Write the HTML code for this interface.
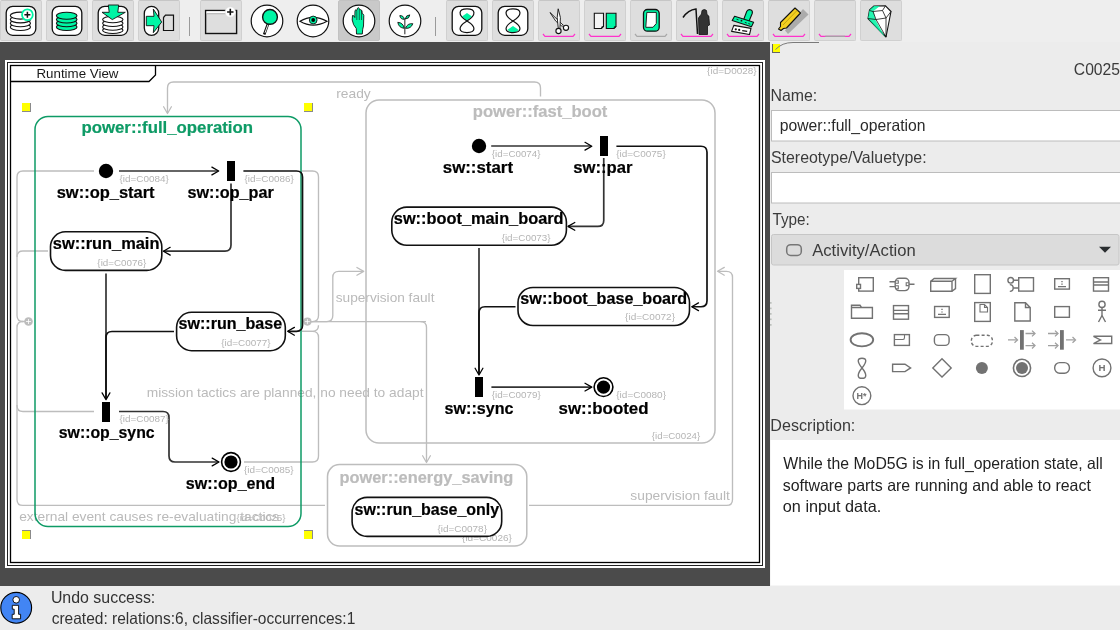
<!DOCTYPE html>
<html><head><meta charset="utf-8">
<style>
html,body{margin:0;padding:0}
body{width:1120px;height:630px;overflow:hidden;position:relative;background:#ededed;font-family:"Liberation Sans",sans-serif;color:#333}
.abs{position:absolute}
svg.abs{will-change:transform}
#toolbar{left:0;top:0;width:1120px;height:42px;background:#eeeeee}
.btn{position:absolute;top:0;width:40px;height:39px;background:#dedede;border:1px solid #d0d0d0;border-top-color:#c6c6c6;border-radius:2px}
.btn.flat{background:transparent;border-color:transparent}
.btn.sel{background:#c9c9c9;border-color:#c2c2c2}
.sep{position:absolute;top:17px;width:1px;height:19px;background:#9a9a9a}
#canvas{left:0;top:42px;width:770px;height:544px;background:#4b4b4b}
#paper{left:5px;top:60px;width:760px;height:508px;background:#fff}
#panel{left:770px;top:42px;width:350px;height:544px;background:#ececec}
#status{left:0;top:586px;width:1120px;height:44px;background:#ececec}
.lbl{position:absolute;font-size:15.4px;color:#3a3a3a;white-space:pre;line-height:1}
.inp{position:absolute;left:771px;width:348px;height:30px;background:#fff;border:1px solid #bdbdbd;border-right:none}
</style></head><body>
<div id="toolbar" class="abs">
  <div class="btn" style="left:0"></div>
  <div class="btn" style="left:46px"></div>
  <div class="btn" style="left:92px"></div>
  <div class="btn" style="left:138px"></div>
  <div class="sep" style="left:189px"></div>
  <div class="btn" style="left:200px"></div>
  <div class="btn flat" style="left:246px"></div>
  <div class="btn flat" style="left:292px"></div>
  <div class="btn sel" style="left:338px"></div>
  <div class="btn flat" style="left:384px"></div>
  <div class="sep" style="left:435px"></div>
  <div class="btn" style="left:446px"></div>
  <div class="btn" style="left:492px"></div>
  <div class="btn" style="left:538px"></div>
  <div class="btn" style="left:584px"></div>
  <div class="btn" style="left:630px"></div>
  <div class="btn" style="left:676px"></div>
  <div class="btn" style="left:722px"></div>
  <div class="btn" style="left:768px"></div>
  <div class="btn" style="left:814px"></div>
  <div class="btn" style="left:860px"></div>
</div>
<div id="canvas" class="abs"></div>
<div id="paper" class="abs"></div>
<div id="panel" class="abs"></div>
<div id="status" class="abs"></div>
<svg class="abs" style="left:0;top:0" width="910" height="42" viewBox="0 0 910 42">
<rect x="6.2" y="6.3" width="29.6" height="29" rx="6.5" fill="#fff" stroke="#111" stroke-width="1.3"/>
<ellipse cx="20.4" cy="27" rx="10.1" ry="3.5" fill="#fff" stroke="#111" stroke-width="1.1"/>
<ellipse cx="20.4" cy="23.2" rx="10.1" ry="3.5" fill="#fff" stroke="#111" stroke-width="1.1"/>
<ellipse cx="20.4" cy="19.4" rx="10.1" ry="3.5" fill="#fff" stroke="#111" stroke-width="1.1"/>
<ellipse cx="20.4" cy="15.6" rx="10.1" ry="3.5" fill="#fff" stroke="#111" stroke-width="1.1"/>
<circle cx="27.4" cy="14.7" r="5.4" fill="#fff" stroke="#00f5a5" stroke-width="1.8"/>
<path d="M27.4,11.7 V17.7 M24.4,14.7 H30.4" stroke="#111" stroke-width="1.5"/>
<rect x="52.2" y="6.3" width="29.6" height="29" rx="6.5" fill="#fff" stroke="#111" stroke-width="1.3"/>
<ellipse cx="66.7" cy="27" rx="10.3" ry="3.5" fill="#00f5a5" stroke="#111" stroke-width="1.1"/>
<ellipse cx="66.7" cy="23.3" rx="10.3" ry="3.5" fill="#00f5a5" stroke="#111" stroke-width="1.1"/>
<ellipse cx="66.7" cy="19.5" rx="10.3" ry="3.5" fill="#00f5a5" stroke="#111" stroke-width="1.1"/>
<ellipse cx="66.7" cy="15.7" rx="10.3" ry="3.5" fill="#00f5a5" stroke="#111" stroke-width="1.1"/>
<rect x="98.2" y="6.3" width="29.6" height="29" rx="6.5" fill="#fff" stroke="#111" stroke-width="1.3"/>
<ellipse cx="112.8" cy="30.2" rx="10.2" ry="3.3" fill="#fff" stroke="#111" stroke-width="1.1"/>
<ellipse cx="112.8" cy="26.9" rx="10.2" ry="3.3" fill="#fff" stroke="#111" stroke-width="1.1"/>
<ellipse cx="112.8" cy="23.2" rx="10.2" ry="3.3" fill="#fff" stroke="#111" stroke-width="1.1"/>
<ellipse cx="112.8" cy="19.5" rx="10.2" ry="3.3" fill="#fff" stroke="#111" stroke-width="1.1"/>
<path d="M108.3,5 H118.7 L117.8,12.3 H125.3 L112.3,19.6 L102,12.3 H109.2 Z" fill="#00f5a5" stroke="#111" stroke-width="0.9" stroke-linejoin="round"/>
<rect x="144.3" y="6.3" width="14.4" height="29" rx="7.2" fill="#fff" stroke="#111" stroke-width="1.3"/>
<path d="M146.3,16.3 H154 L153.3,9 L161.7,22 L153.3,32.7 L154,25.7 H146.3 Z" fill="#00f5a5" stroke="#111" stroke-width="0.9" stroke-linejoin="round"/>
<path d="M165.5,15.2 H173.5 V30.5 H163.5 V17.5 Z M163.5,17.5 L165.5,15.2" fill="#dedede" stroke="#111" stroke-width="1.2"/>
<rect x="205.6" y="10.5" width="31" height="23" fill="#dedede" stroke="#111" stroke-width="1.4"/>
<rect x="206.5" y="11.3" width="24" height="2.2" fill="#fff"/><rect x="206.5" y="13.3" width="24" height="0.9" fill="#aaa"/>
<circle cx="230.3" cy="12" r="5.2" fill="#fff" stroke="#ddd" stroke-width="0.6"/>
<path d="M230.3,8.8 V15.2 M227.1,12 H233.5" stroke="#111" stroke-width="1.6"/>
<circle cx="267" cy="21" r="15.8" fill="#fff" stroke="#111" stroke-width="1.2"/>
<circle cx="313" cy="21" r="15.8" fill="#fff" stroke="#111" stroke-width="1.2"/>
<circle cx="359" cy="21" r="15.8" fill="#fff" stroke="#111" stroke-width="1.2"/>
<circle cx="405" cy="21" r="15.8" fill="#fff" stroke="#111" stroke-width="1.2"/>
<path d="M268,24 L264.6,33.3" stroke="#111" stroke-width="2.6" stroke-linecap="square"/>
<path d="M268,24.5 L265,32.8" stroke="#fff" stroke-width="0.9"/>
<circle cx="270" cy="16.9" r="7.4" fill="#00f5a5" stroke="#111" stroke-width="1.4"/>
<path d="M300,21.3 Q313,13.5 327,21.3 Q313,29 300,21.3 Z" fill="#fff" stroke="#111" stroke-width="1.2"/>
<circle cx="313.2" cy="20" r="3.9" fill="#00f5a5" stroke="#111" stroke-width="0.9"/>
<circle cx="313.2" cy="20" r="1.9" fill="#000"/>
<path d="M356.5,34 L356.3,28.5 Q353,25 352.2,20 L352.5,15.5 Q353.5,14.8 354.8,17.5 L355,10.5 Q355.8,9.2 356.8,10.5 L357.5,8.2 Q358.5,7 359.3,8.5 L360.3,9.8 Q361.5,9.5 362,11 L362.2,13.5 Q363.5,13.8 363.8,15.5 L363.5,26 Q362.5,28.5 362.3,34 Z" fill="#00f5a5" stroke="#111" stroke-width="0.9" stroke-linejoin="round"/>
<path d="M356.8,11 V20 M359.3,9 V20 M361.5,11 V20" stroke="#111" stroke-width="0.6"/>
<path d="M404.8,18.5 V34.3" stroke="#555" stroke-width="1.3"/>
<path d="M404.3,19.3 Q403.70,15.44 399.8,15.6 Q400.40,19.46 404.3,19.3 Z" fill="#00f5a5" stroke="#111" stroke-width="0.9" stroke-linejoin="round"/>
<path d="M405.3,19.0 Q409.30,18.87 409.8,14.9 Q405.80,15.03 405.3,19.0 Z" fill="#00f5a5" stroke="#111" stroke-width="0.9" stroke-linejoin="round"/>
<path d="M404.2,28.3 Q403.33,22.82 397.8,22.3 Q398.67,27.78 404.2,28.3 Z" fill="#00f5a5" stroke="#111" stroke-width="0.9" stroke-linejoin="round"/>
<path d="M405.5,28.3 Q410.96,28.88 412.8,23.7 Q407.34,23.12 405.5,28.3 Z" fill="#00f5a5" stroke="#111" stroke-width="0.9" stroke-linejoin="round"/>
<rect x="452.2" y="6.3" width="29.6" height="29" rx="6.5" fill="#fff" stroke="#111" stroke-width="1.3"/>
<path d="M467,13 L472,16.5 L467,21 L462,16.5 Z" fill="#00f5a5"/>
<path d="M467,21 C457,15 458.5,8.8 467,8.8 C475.5,8.8 477,15 467,21 C457,27 458.5,32.6 467,32.6 C475.5,32.6 477,27 467,21 Z" fill="none" stroke="#111" stroke-width="1.2"/>
<rect x="498.2" y="6.3" width="29.6" height="29" rx="6.5" fill="#fff" stroke="#111" stroke-width="1.3"/>
<path d="M507.5,29.7 L513,26 L518.5,29.7 Q517,32.3 513,32.3 Q509,32.3 507.5,29.7 Z" fill="#00f5a5"/>
<path d="M513,21 C503,15 504.5,8.8 513,8.8 C521.5,8.8 523,15 513,21 C503,27 504.5,32.6 513,32.6 C521.5,32.6 523,27 513,21 Z" fill="none" stroke="#111" stroke-width="1.2"/>
<path d="M550,12.5 L557,19.2 L563.3,25.3 L562.2,26.4 L555.8,21.2 Z" fill="#fff" stroke="#111" stroke-width="0.9" stroke-linejoin="round"/>
<path d="M558.2,8.8 L560.4,17.5 L559.9,28.5 L558.3,28.5 L557.2,17.5 Z" fill="#fff" stroke="#111" stroke-width="0.9" stroke-linejoin="round"/>
<circle cx="558.5" cy="31" r="2.6" fill="#fff" stroke="#111" stroke-width="1.1"/>
<circle cx="566" cy="27.8" r="2.6" fill="#fff" stroke="#111" stroke-width="1.1"/>
<path d="M543,34 L545,36.3 H573 L575,34" fill="none" stroke="#ff33cc" stroke-width="1.2"/>
<path d="M594.3,13.2 H603.5 V26.5 L601.5,28.5 H594.3 Z" fill="#f4f4f4" stroke="#111" stroke-width="1.1"/>
<path d="M606.3,13.2 H616 V26.5 L614,28.5 H606.3 Z" fill="#00f5a5" stroke="#111" stroke-width="1.1"/>
<path d="M601.5,28.5 L601.8,26.7 L603.5,26.5 Z M614,28.5 L614.3,26.7 L616,26.5 Z" fill="#333" stroke="#111" stroke-width="0.6"/>
<path d="M589,34 L591,36.3 H619 L621,34" fill="none" stroke="#ff33cc" stroke-width="1.2"/>
<rect x="643.5" y="9.5" width="15.7" height="21.7" rx="4" fill="#00f5a5" stroke="#111" stroke-width="1.3"/>
<path d="M646.8,12.4 H656.3 V23.5 L653,27.3 H645.8 Z" fill="#fff" stroke="#111" stroke-width="0.9"/>
<path d="M635,34 L637,36.3 H665 L667,34" fill="none" stroke="#a8a8a8" stroke-width="1.2"/>
<path d="M683,17.5 Q688,10 696,9 L697.5,34" fill="none" stroke="#111" stroke-width="1.5"/>
<path d="M699,34.5 L698.5,18 Q700.5,15 701.5,14 L702,10.5 Q704.5,8.5 706.5,10.5 L707,14.5 Q709.5,15.5 709,18.5 L709.5,25 L707.5,26 L707.5,34.5 Z" fill="#333" stroke="#111" stroke-width="0.8"/>
<path d="M681,34 L683,36.3 H711 L713,34" fill="none" stroke="#ff33cc" stroke-width="1.2"/>
<path d="M743.2,20.8 L746.8,11.3 Q748.5,8.8 751,9.9 Q753,11.2 752.2,13.5 L748.6,22.3 Z" fill="#00f5a5" stroke="#111" stroke-width="1.1" stroke-linejoin="round"/>
<path d="M734.6,16.3 L753.6,22.3 L751.4,26.8 L732.2,20.6 Z" fill="#00f5a5" stroke="#111" stroke-width="1.1" stroke-linejoin="round"/>
<circle cx="741.5" cy="20.7" r="0.9" fill="#111"/><path d="M736.5,19.2 L738.5,19.9 M744.8,22.3 L746.8,23 M748.3,23.5 L750.3,24.2" stroke="#111" stroke-width="0.8"/>
<path d="M733.8,25.4 L751,28.4 L749.5,34.5 L731.6,31.4 Z" fill="#fff" stroke="#111" stroke-width="1.1" stroke-linejoin="round"/>
<circle cx="735.8" cy="29.3" r="1.1" fill="#111"/><circle cx="739.2" cy="29.9" r="1.1" fill="#111"/><path d="M742.2,30.6 L747.2,31.4" stroke="#111" stroke-width="1.1"/>
<path d="M727,34 L729,36.3 H757 L759,34" fill="none" stroke="#ff33cc" stroke-width="1.2"/>
<path d="M803,9 L808.5,14.5 L788,34 L785,30.5 Z" fill="#888" opacity="0.6"/>
<path d="M780.5,22.5 L795,8 L800.5,13 L786.5,28 L783.5,28.5 L781,30.5 L778.5,29 L780.5,26.5 Z" fill="#f5d020" stroke="#111" stroke-width="1.1" stroke-linejoin="round"/>
<path d="M783,25 L797,10.5" stroke="#b59a10" stroke-width="0.8"/>
<path d="M773,34 L775,36.3 H803 L805,34" fill="none" stroke="#ff33cc" stroke-width="1.2"/>
<path d="M819,34 L821,36.3 H849 L851,34" fill="none" stroke="#ff33cc" stroke-width="1.2"/>
<path d="M825.2,36.3 H845" stroke="#a4a4a4" stroke-width="1.3"/>
<path d="M869.5,10 L874,6 L885.5,5.8 L891,11.5 L886,37 L868,18.5 Z" fill="#fff" stroke="#111" stroke-width="1.1" stroke-linejoin="round"/>
<path d="M869.5,10 L874,6 L880,6 L873.5,11 L875.5,20 L885,37 L868,18.5 Z" fill="#00f5a5" opacity="0.85"/>
<path d="M869.5,10.5 L873,11.5 L882.5,10.5 L885.5,5.8 M882.5,10.5 L886,18 L876,19.5 L873,11.5 M876,19.5 L868,18.5 M886,18 L891,11.5 M876,19.5 L886,37 M886,18 V37" fill="none" stroke="#111" stroke-width="0.8"/>
</svg><svg class="abs" style="left:0;top:0" width="770" height="586" viewBox="0 0 770 586" font-family="Liberation Sans, sans-serif">
<rect x="7.5" y="62.5" width="755" height="503" fill="none" stroke="#222" stroke-width="1"/>
<rect x="10.5" y="65.5" width="749" height="497" fill="none" stroke="#000" stroke-width="1.3"/>
<path d="M10.5,81.5 H149 L155.5,75 V65.5" fill="none" stroke="#000" stroke-width="1.3"/>
<text x="36.46" y="77.80" font-size="13" font-weight="normal" fill="#1a1a1a" textLength="82.03" lengthAdjust="spacingAndGlyphs">Runtime View</text>
<text x="707.14" y="74.10" font-size="9" font-weight="normal" fill="#b5b5b5" textLength="49.49" lengthAdjust="spacingAndGlyphs">{id=D0028}</text>
<path d="M540.5,96.6 V88 Q540.5,82 534.5,82 H173.5 Q167.5,82 167.5,88 V113" fill="none" stroke="#bdbdbd" stroke-width="1.35" stroke-linecap="butt"/>
<path d="M163.60,106.70 L167.50,113.50 L171.40,106.70" fill="none" stroke="#bdbdbd" stroke-width="1.25" stroke-linecap="round" stroke-linejoin="round"/>
<text x="336.27" y="97.90" font-size="13.3" font-weight="normal" fill="#bababa" textLength="34.51" lengthAdjust="spacingAndGlyphs">ready</text>
<path d="M94,171 H23 Q17,171 17,177 V315.5 Q17,321.5 23,321.5 H25" fill="none" stroke="#bdbdbd" stroke-width="1.35" stroke-linecap="butt"/>
<path d="M48,251 H23 Q17,251 17,257" fill="none" stroke="#bdbdbd" stroke-width="1.35" stroke-linecap="butt"/>
<path d="M94,411.5 H23 Q17,411.5 17,405.5 V327.5 Q17,321.5 23,321.5" fill="none" stroke="#bdbdbd" stroke-width="1.35" stroke-linecap="butt"/>
<path d="M325,505.4 H23 Q17,505.4 17,499.4 V405" fill="none" stroke="#bdbdbd" stroke-width="1.35" stroke-linecap="butt"/>
<circle cx="28.5" cy="321.5" r="4.3" fill="#bdbdbd"/>
<path d="M28.5,319 V324 M26,321.5 H31" stroke="#fff" stroke-width="0.8"/>
<path d="M302,171 H312.5 Q318.5,171 318.5,177 V315.6 Q318.5,321.6 312.5,321.6 H311" fill="none" stroke="#bdbdbd" stroke-width="1.35" stroke-linecap="butt"/>
<path d="M244,462 H312.5 Q318.5,462 318.5,456 V337.3 Q318.5,331.3 312.5,331.3 H302" fill="none" stroke="#bdbdbd" stroke-width="1.35" stroke-linecap="butt"/>
<path d="M302,331.3 H312.5 Q318.5,331.3 318.5,325.3" fill="none" stroke="#bdbdbd" stroke-width="1.35" stroke-linecap="butt"/>
<path d="M311,321.6 H426" fill="none" stroke="#bdbdbd" stroke-width="1.35" stroke-linecap="butt"/>
<path d="M311,321.6 H326.8 Q332.8,321.6 332.8,315.6 V277.4 Q332.8,271.4 338.8,271.4 H363" fill="none" stroke="#bdbdbd" stroke-width="1.35" stroke-linecap="butt"/>
<path d="M356.90,267.50 L363.70,271.40 L356.90,275.30" fill="none" stroke="#bdbdbd" stroke-width="1.25" stroke-linecap="round" stroke-linejoin="round"/>
<text x="335.76" y="302.10" font-size="13.3" font-weight="normal" fill="#bababa" textLength="98.69" lengthAdjust="spacingAndGlyphs">supervision fault</text>
<path d="M420.5,321.6 Q426.5,321.6 426.5,327.6 V462" fill="none" stroke="#bdbdbd" stroke-width="1.35" stroke-linecap="butt"/>
<path d="M422.60,455.70 L426.50,462.50 L430.40,455.70" fill="none" stroke="#bdbdbd" stroke-width="1.25" stroke-linecap="round" stroke-linejoin="round"/>
<circle cx="307.4" cy="321.6" r="4.1" fill="#bdbdbd"/>
<path d="M307.4,319.1 V324.1 M304.9,321.6 H309.9" stroke="#fff" stroke-width="0.8"/>
<text x="146.68" y="397.20" font-size="13.3" font-weight="normal" fill="#bababa" textLength="276.85" lengthAdjust="spacingAndGlyphs">mission tactics are planned, no need to adapt</text>
<path d="M529,505.4 H726.5 Q732.5,505.4 732.5,499.4 V277.3 Q732.5,271.3 726.5,271.3 H718" fill="none" stroke="#bdbdbd" stroke-width="1.35" stroke-linecap="butt"/>
<path d="M724.30,267.40 L717.50,271.30 L724.30,275.20" fill="none" stroke="#bdbdbd" stroke-width="1.25" stroke-linecap="round" stroke-linejoin="round"/>
<text x="630.39" y="500.20" font-size="13.3" font-weight="normal" fill="#bababa" textLength="99.56" lengthAdjust="spacingAndGlyphs">supervision fault</text>
<text x="19.17" y="521.00" font-size="13.3" font-weight="normal" fill="#bababa" textLength="260.06" lengthAdjust="spacingAndGlyphs">external event causes re-evaluating tactics</text>
<rect x="35.00" y="116.50" width="266.00" height="410.00" rx="13" fill="none" stroke="#0e9b66" stroke-width="1.5"/>
<text x="81.47" y="132.50" font-size="16" font-weight="bold" fill="#0e9b66" stroke="#0e9b66" stroke-width="0.2" textLength="171.56" lengthAdjust="spacingAndGlyphs">power::full_operation</text>
<text x="236.40" y="521.40" font-size="9" font-weight="normal" fill="#b5b5b5" textLength="49.05" lengthAdjust="spacingAndGlyphs">{id=C0025}</text>
<rect x="366.00" y="100.00" width="349.00" height="343.00" rx="13" fill="none" stroke="#bdbdbd" stroke-width="1.5"/>
<text x="472.88" y="117.10" font-size="16" font-weight="bold" fill="#bcbcbc" stroke="#bcbcbc" stroke-width="0.2" textLength="134.43" lengthAdjust="spacingAndGlyphs">power::fast_boot</text>
<text x="651.83" y="439.10" font-size="9" font-weight="normal" fill="#b5b5b5" textLength="48.41" lengthAdjust="spacingAndGlyphs">{id=C0024}</text>
<rect x="327.50" y="464.60" width="199.30" height="81.50" rx="12" fill="#fff" stroke="#bdbdbd" stroke-width="1.5"/>
<text x="339.50" y="482.90" font-size="16" font-weight="bold" fill="#bcbcbc" stroke="#bcbcbc" stroke-width="0.2" textLength="173.78" lengthAdjust="spacingAndGlyphs">power::energy_saving</text>
<text x="462.06" y="540.90" font-size="9" font-weight="normal" fill="#b5b5b5" textLength="49.82" lengthAdjust="spacingAndGlyphs">{id=C0026}</text>
<path d="M119,171 H218" fill="none" stroke="#333333" stroke-width="1.7" stroke-linecap="butt"/>
<path d="M211.90,167.10 L218.70,171.00 L211.90,174.90" fill="none" stroke="#000" stroke-width="1.25" stroke-linecap="round" stroke-linejoin="round"/>
<path d="M231,183.5 V245 Q231,251.2 225,251.2 H163.5" fill="none" stroke="#333333" stroke-width="1.7" stroke-linecap="butt"/>
<path d="M170.20,247.30 L163.40,251.20 L170.20,255.10" fill="none" stroke="#000" stroke-width="1.25" stroke-linecap="round" stroke-linejoin="round"/>
<path d="M243.4,171 H296.5 Q302.5,171 302.5,177 V325.3 Q302.5,331.3 296.5,331.3 H288" fill="none" stroke="#111" stroke-width="1.7" stroke-linecap="butt"/>
<path d="M294.40,327.40 L287.60,331.30 L294.40,335.20" fill="none" stroke="#000" stroke-width="1.25" stroke-linecap="round" stroke-linejoin="round"/>
<path d="M106,273.4 V399" fill="none" stroke="#333333" stroke-width="1.7" stroke-linecap="butt"/>
<path d="M174,331.5 H112 Q106,331.5 106,337.5 V399" fill="none" stroke="#111" stroke-width="1.7" stroke-linecap="butt"/>
<path d="M102.10,392.90 L106.00,399.70 L109.90,392.90" fill="none" stroke="#000" stroke-width="1.25" stroke-linecap="round" stroke-linejoin="round"/>
<path d="M119,411.5 H163 Q169,411.5 169,417.5 V456 Q169,462 175,462 H218.5" fill="none" stroke="#333333" stroke-width="1.7" stroke-linecap="butt"/>
<path d="M212.20,458.10 L219.00,462.00 L212.20,465.90" fill="none" stroke="#000" stroke-width="1.25" stroke-linecap="round" stroke-linejoin="round"/>
<path d="M491.2,146 H591" fill="none" stroke="#333333" stroke-width="1.7" stroke-linecap="butt"/>
<path d="M585.00,142.30 L591.80,146.20 L585.00,150.10" fill="none" stroke="#000" stroke-width="1.25" stroke-linecap="round" stroke-linejoin="round"/>
<path d="M603.75,158 V220.4 Q603.75,226.4 597.75,226.4 H568" fill="none" stroke="#333333" stroke-width="1.7" stroke-linecap="butt"/>
<path d="M574.80,222.50 L568.00,226.40 L574.80,230.30" fill="none" stroke="#000" stroke-width="1.25" stroke-linecap="round" stroke-linejoin="round"/>
<path d="M616.4,146.25 H701 Q707,146.25 707,152.25 V300.75 Q707,306.75 701,306.75 H692" fill="none" stroke="#111" stroke-width="1.7" stroke-linecap="butt"/>
<path d="M698.50,302.85 L691.70,306.75 L698.50,310.65" fill="none" stroke="#000" stroke-width="1.25" stroke-linecap="round" stroke-linejoin="round"/>
<path d="M479,248 V374" fill="none" stroke="#333333" stroke-width="1.7" stroke-linecap="butt"/>
<path d="M515.5,306.75 H485 Q479,306.75 479,312.75 V374" fill="none" stroke="#111" stroke-width="1.7" stroke-linecap="butt"/>
<path d="M475.10,368.20 L479.00,375.00 L482.90,368.20" fill="none" stroke="#000" stroke-width="1.25" stroke-linecap="round" stroke-linejoin="round"/>
<path d="M491.4,387.1 H591" fill="none" stroke="#333333" stroke-width="1.7" stroke-linecap="butt"/>
<path d="M585.00,383.20 L591.80,387.10 L585.00,391.00" fill="none" stroke="#000" stroke-width="1.25" stroke-linecap="round" stroke-linejoin="round"/>
<rect x="50.50" y="231.80" width="111.30" height="38.60" rx="15" fill="#fff" stroke="#111" stroke-width="1.6"/>
<text x="52.83" y="249.00" font-size="16" font-weight="bold" fill="#000" stroke="#000" stroke-width="0.2" textLength="106.62" lengthAdjust="spacingAndGlyphs">sw::run_main</text>
<text x="97.39" y="266.00" font-size="9" font-weight="normal" fill="#b5b5b5" textLength="48.85" lengthAdjust="spacingAndGlyphs">{id=C0076}</text>
<rect x="176.60" y="312.30" width="108.70" height="38.40" rx="15" fill="#fff" stroke="#111" stroke-width="1.6"/>
<text x="178.58" y="328.90" font-size="16" font-weight="bold" fill="#000" stroke="#000" stroke-width="0.2" textLength="103.56" lengthAdjust="spacingAndGlyphs">sw::run_base</text>
<text x="221.26" y="345.60" font-size="9" font-weight="normal" fill="#b5b5b5" textLength="49.41" lengthAdjust="spacingAndGlyphs">{id=C0077}</text>
<rect x="391.80" y="207.10" width="174.60" height="38.20" rx="15" fill="#fff" stroke="#111" stroke-width="1.6"/>
<text x="393.84" y="223.90" font-size="16" font-weight="bold" fill="#000" stroke="#000" stroke-width="0.2" textLength="169.75" lengthAdjust="spacingAndGlyphs">sw::boot_main_board</text>
<text x="501.67" y="241.00" font-size="9" font-weight="normal" fill="#b5b5b5" textLength="48.93" lengthAdjust="spacingAndGlyphs">{id=C0073}</text>
<rect x="518.00" y="287.50" width="171.50" height="38.00" rx="15" fill="#fff" stroke="#111" stroke-width="1.6"/>
<text x="520.39" y="303.75" font-size="16" font-weight="bold" fill="#000" stroke="#000" stroke-width="0.2" textLength="166.83" lengthAdjust="spacingAndGlyphs">sw::boot_base_board</text>
<text x="625.06" y="320.30" font-size="9" font-weight="normal" fill="#b5b5b5" textLength="49.98" lengthAdjust="spacingAndGlyphs">{id=C0072}</text>
<rect x="352.10" y="497.40" width="149.60" height="39.00" rx="15" fill="#fff" stroke="#111" stroke-width="1.6"/>
<text x="354.52" y="514.60" font-size="16" font-weight="bold" fill="#000" stroke="#000" stroke-width="0.2" textLength="144.59" lengthAdjust="spacingAndGlyphs">sw::run_base_only</text>
<text x="437.44" y="531.70" font-size="9" font-weight="normal" fill="#b5b5b5" textLength="49.53" lengthAdjust="spacingAndGlyphs">{id=C0078}</text>
<circle cx="106" cy="171" r="7.2" fill="#000"/>
<text x="56.69" y="198.00" font-size="16" font-weight="bold" fill="#000" stroke="#000" stroke-width="0.2" textLength="97.92" lengthAdjust="spacingAndGlyphs">sw::op_start</text>
<text x="119.40" y="182.10" font-size="9" font-weight="normal" fill="#b5b5b5" textLength="49.38" lengthAdjust="spacingAndGlyphs">{id=C0084}</text>
<circle cx="479" cy="146" r="7.2" fill="#000"/>
<text x="442.75" y="172.50" font-size="16" font-weight="bold" fill="#000" stroke="#000" stroke-width="0.2" textLength="70.30" lengthAdjust="spacingAndGlyphs">sw::start</text>
<text x="491.83" y="156.80" font-size="9" font-weight="normal" fill="#b5b5b5" textLength="48.65" lengthAdjust="spacingAndGlyphs">{id=C0074}</text>
<rect x="227" y="161" width="8" height="20" fill="#000"/>
<rect x="102" y="402" width="8" height="20" fill="#000"/>
<rect x="600" y="136" width="8" height="20" fill="#000"/>
<rect x="475" y="377" width="8" height="20" fill="#000"/>
<text x="187.46" y="197.50" font-size="16" font-weight="bold" fill="#000" stroke="#000" stroke-width="0.2" textLength="86.24" lengthAdjust="spacingAndGlyphs">sw::op_par</text>
<text x="244.40" y="181.80" font-size="9" font-weight="normal" fill="#b5b5b5" textLength="49.38" lengthAdjust="spacingAndGlyphs">{id=C0086}</text>
<text x="58.78" y="438.40" font-size="16" font-weight="bold" fill="#000" stroke="#000" stroke-width="0.2" textLength="95.86" lengthAdjust="spacingAndGlyphs">sw::op_sync</text>
<text x="119.40" y="422.00" font-size="9" font-weight="normal" fill="#b5b5b5" textLength="49.38" lengthAdjust="spacingAndGlyphs">{id=C0087}</text>
<text x="573.31" y="172.50" font-size="16" font-weight="bold" fill="#000" stroke="#000" stroke-width="0.2" textLength="59.23" lengthAdjust="spacingAndGlyphs">sw::par</text>
<text x="616.15" y="156.80" font-size="9" font-weight="normal" fill="#b5b5b5" textLength="49.59" lengthAdjust="spacingAndGlyphs">{id=C0075}</text>
<text x="444.58" y="413.80" font-size="16" font-weight="bold" fill="#000" stroke="#000" stroke-width="0.2" textLength="68.94" lengthAdjust="spacingAndGlyphs">sw::sync</text>
<text x="491.65" y="397.70" font-size="9" font-weight="normal" fill="#b5b5b5" textLength="49.12" lengthAdjust="spacingAndGlyphs">{id=C0079}</text>
<circle cx="231" cy="462" r="9.4" fill="#fff" stroke="#000" stroke-width="1.6"/>
<circle cx="231" cy="462" r="6.6" fill="#000"/>
<circle cx="603.5" cy="387.1" r="9.4" fill="#fff" stroke="#000" stroke-width="1.6"/>
<circle cx="603.5" cy="387.1" r="6.6" fill="#000"/>
<text x="185.88" y="489.10" font-size="16" font-weight="bold" fill="#000" stroke="#000" stroke-width="0.2" textLength="89.26" lengthAdjust="spacingAndGlyphs">sw::op_end</text>
<text x="244.06" y="472.80" font-size="9" font-weight="normal" fill="#b5b5b5" textLength="49.61" lengthAdjust="spacingAndGlyphs">{id=C0085}</text>
<text x="558.57" y="413.80" font-size="16" font-weight="bold" fill="#000" stroke="#000" stroke-width="0.2" textLength="90.00" lengthAdjust="spacingAndGlyphs">sw::booted</text>
<text x="616.27" y="397.70" font-size="9" font-weight="normal" fill="#b5b5b5" textLength="49.74" lengthAdjust="spacingAndGlyphs">{id=C0080}</text>
<rect x="22" y="103" width="9" height="9" fill="#ffff00"/>
<rect x="30" y="103" width="1" height="9" fill="#8a8a8a"/>
<rect x="22" y="111" width="9" height="1" fill="#8a8a8a"/>
<rect x="304" y="103" width="9" height="9" fill="#ffff00"/>
<rect x="312" y="103" width="1" height="9" fill="#8a8a8a"/>
<rect x="304" y="111" width="9" height="1" fill="#8a8a8a"/>
<rect x="22" y="530" width="9" height="9" fill="#ffff00"/>
<rect x="22" y="530" width="9" height="1" fill="#8a8a8a"/>
<rect x="30" y="530" width="1" height="9" fill="#8a8a8a"/>
<rect x="304" y="530" width="9" height="9" fill="#ffff00"/>
<rect x="304" y="530" width="9" height="1" fill="#8a8a8a"/>
<rect x="312" y="530" width="1" height="9" fill="#8a8a8a"/>
</svg><svg class="abs" style="left:0;top:0" width="1120" height="630" viewBox="0 0 1120 630" font-family="Liberation Sans, sans-serif">
<text x="1073.82" y="74.60" font-size="16.5" font-weight="normal" fill="#3b3b3b" textLength="46.20" lengthAdjust="spacingAndGlyphs">C0025</text>
<text x="770.44" y="100.80" font-size="16.5" font-weight="normal" fill="#3b3b3b" textLength="46.85" lengthAdjust="spacingAndGlyphs">Name:</text>
<rect x="771.5" y="110.5" width="350" height="30.5" fill="#fff" stroke="#bcbcbc" stroke-width="1"/>
<text x="779.77" y="131.30" font-size="16.5" font-weight="normal" fill="#2a2a2a" textLength="145.80" lengthAdjust="spacingAndGlyphs">power::full_operation</text>
<text x="770.90" y="162.80" font-size="16.5" font-weight="normal" fill="#3b3b3b" textLength="155.69" lengthAdjust="spacingAndGlyphs">Stereotype/Valuetype:</text>
<rect x="771.5" y="172.5" width="350" height="30.5" fill="#fff" stroke="#bcbcbc" stroke-width="1"/>
<text x="772.46" y="225.10" font-size="16.5" font-weight="normal" fill="#3b3b3b" textLength="37.38" lengthAdjust="spacingAndGlyphs">Type:</text>
<rect x="771.5" y="234.5" width="347.5" height="30.5" rx="2" fill="#dcdcdc" stroke="#c6c6c6" stroke-width="1"/>
<rect x="786.7" y="244.7" width="14.6" height="10.8" rx="4" fill="none" stroke="#767676" stroke-width="1.5"/>
<text x="812.21" y="256.40" font-size="16.5" font-weight="normal" fill="#3b3b3b" textLength="103.50" lengthAdjust="spacingAndGlyphs">Activity/Action</text>
<path d="M1099,246.8 H1111 L1105,252.8 Z" fill="#2a2e30"/>
<rect x="844" y="270" width="276" height="139.5" fill="#fff"/>
<g fill="none" stroke="#727272" stroke-width="1.4">
<rect x="858.7" y="277.7" width="14.6" height="13.4"/>
<rect x="856.7" y="284.4" width="3.8" height="4" fill="#fff"/>
<rect x="895.2" y="278.2" width="13.8" height="12.4" rx="4"/>
<path d="M889.5,281.7 H895 M889.5,286.6 H895 M909,284.2 H914.5" />
<path d="M895.5,280.8 H898.3 V283.3 H895.5 M895.5,285.8 H898.3 V288.8 H895.5 M908.8,282.8 H906.2 V285.6 H908.8" stroke-width="1.1"/>
<path d="M930.7,281.2 H952 V291.3 H930.7 Z M930.7,281.2 L934.2,278.5 H955.5 L952,281.2 M955.5,278.5 V288.6 L952,291.3" />
<rect x="974.7" y="274.7" width="15.6" height="18.7"/>
<rect x="1018.7" y="277.7" width="14.8" height="13.4"/>
<circle cx="1010.7" cy="280.3" r="2.8"/>
<path d="M1009.8,284.6 A3.4,3.4 0 0 1 1009.8,291.4" />
<path d="M1013.5,280.3 H1018.5 M1013.2,288 H1018.5" />
<rect x="1054.7" y="278.7" width="14.7" height="10.4"/>
<path d="M1062,281 V282.2 M1062,283.6 V284.8 M1058,286.6 H1066" />
<rect x="1093.5" y="277.7" width="15" height="13.4"/>
<path d="M1093.5,282 H1108.5 M1093.5,285 H1108.5" />
<path d="M851.5,307.5 H872.4 V318.2 H851.5 Z M851.5,307.5 V305.2 H860 L861.5,307.5" />
<rect x="893.5" y="305.6" width="15" height="13.6"/>
<path d="M893.5,310.4 H908.5 M893.5,313.7 H908.5" />
<rect x="934.6" y="306.5" width="14.6" height="10.9"/>
<path d="M942,308.8 V310 M942,311.4 V312.6 M938,314.4 H946" />
<rect x="974.7" y="302.6" width="15.6" height="18.8"/>
<path d="M980,304.5 H984.5 L987.5,307.5 V312 H980 Z M984.5,304.5 V307.5 H987.5" stroke-width="1.1"/>
<path d="M1014.8,302.8 H1025.5 L1030.2,307.5 V321 H1014.8 Z M1025.5,302.8 V307.5 H1030.2" />
<rect x="1054.7" y="306.6" width="14.7" height="10.7"/>
<circle cx="1102" cy="304.4" r="3.1"/>
<path d="M1102,307.5 V315.5 M1098,310.3 H1106 M1102,315.5 L1098.5,322 M1102,315.5 L1105.5,322" />
<ellipse cx="861.9" cy="339.8" rx="11.3" ry="6.6" stroke-width="1.9"/>
<rect x="894.4" y="334.6" width="15" height="10.8"/>
<path d="M894.4,339.5 H903 Q904.5,339.5 904.5,337.5 V334.6" stroke-width="1.1"/>
<rect x="934.4" y="334.6" width="14.7" height="10.8" rx="4"/>
<rect x="971.4" y="335.3" width="21" height="11.1" rx="5" stroke-dasharray="3,2.2"/>
<path d="M1008,339.9 H1017 M1025.5,333.5 H1034.5 M1025.5,345.6 H1034.5 M1048,333.5 H1057.5 M1048,345.6 H1057.5 M1066,339.9 H1075" stroke="#a0a0a0" stroke-width="1.3"/>
<path d="M1014.5,337 L1017.5,339.9 L1014.5,342.8 M1032,330.6 L1035,333.5 L1032,336.4 M1032,342.7 L1035,345.6 L1032,348.5 M1055,330.6 L1058,333.5 L1055,336.4 M1055,342.7 L1058,345.6 L1055,348.5 M1072.5,337 L1075.5,339.9 L1072.5,342.8" stroke="#a0a0a0" stroke-width="1.3"/>
<path d="M1093.5,336.3 H1111.7 V343.5 H1093.5 L1100.5,339.9 Z" />
<path d="M862,368 C857,362 857,358.2 862,358.2 C867,358.2 867,362 862,368 C857,374 857,378.3 862,378.3 C867,378.3 867,374 862,368 Z" />
<path d="M892.6,364.2 H905 L910.6,367.9 L905,371.6 H892.6 Z" />
<path d="M942,358.7 L951.2,367.9 L942,377.1 L932.8,367.9 Z" />
<circle cx="1022" cy="367.9" r="8.6" stroke-width="1.6"/>
<rect x="1054.7" y="362.6" width="14.7" height="10.6" rx="5"/>
<circle cx="1102" cy="367.9" r="8.9"/>
<circle cx="861.9" cy="395.7" r="8.9"/>
</g>
<circle cx="981.9" cy="367.9" r="6" fill="#727272"/>
<circle cx="1022" cy="367.9" r="6" fill="#727272"/>
<rect x="1020" y="330.1" width="3.8" height="19.6" fill="#727272"/><rect x="1060" y="330.1" width="3.8" height="19.6" fill="#727272"/>
<text x="1098.6" y="371.3" font-size="9" font-weight="bold" fill="#727272" textLength="7" lengthAdjust="spacingAndGlyphs">H</text>
<text x="856.5" y="399.2" font-size="9" font-weight="bold" fill="#727272" textLength="10" lengthAdjust="spacingAndGlyphs">H*</text>
<text x="770.36" y="430.70" font-size="16.5" font-weight="normal" fill="#3b3b3b" textLength="84.99" lengthAdjust="spacingAndGlyphs">Description:</text>
<rect x="770.5" y="440" width="349.5" height="145.5" fill="#fff"/>
<text x="783.24" y="468.80" font-size="16.5" font-weight="normal" fill="#222" textLength="319.51" lengthAdjust="spacingAndGlyphs">While the MoD5G is in full_operation state, all</text>
<text x="782.72" y="491.00" font-size="16.5" font-weight="normal" fill="#222" textLength="308.16" lengthAdjust="spacingAndGlyphs">software parts are running and able to react</text>
<text x="782.85" y="512.20" font-size="16.5" font-weight="normal" fill="#222" textLength="98.34" lengthAdjust="spacingAndGlyphs">on input data.</text>
<text x="50.89" y="602.80" font-size="16.5" font-weight="normal" fill="#333" textLength="104.41" lengthAdjust="spacingAndGlyphs">Undo success:</text>
<text x="51.65" y="624.40" font-size="16.5" font-weight="normal" fill="#333" textLength="303.68" lengthAdjust="spacingAndGlyphs">created: relations:6, classifier-occurrences:1</text>
<circle cx="16.2" cy="607.8" r="15.4" fill="#4285f4" stroke="#000" stroke-width="1.1"/>
<circle cx="16.2" cy="599.8" r="3.3" fill="#fff" stroke="#000" stroke-width="0.9"/>
<path d="M12.3,605.3 H18.6 V614.3 H20.6 V618.8 H12.2 V614.3 H14.2 V609.2 H12.3 Z" fill="#fff" stroke="#000" stroke-width="0.9" stroke-linejoin="round"/>
<rect x="772" y="44" width="8" height="9" fill="#ffff00"/>
<rect x="772" y="44" width="1" height="9" fill="#666"/><rect x="772" y="52" width="8" height="1" fill="#666"/>
<path d="M775.5,49.5 Q782,42.5 793,42.5 H819" fill="none" stroke="#7a7a7a" stroke-width="1"/>
<rect x="770" y="302.1" width="1.6" height="1.6" fill="#b8bcb8"/>
<rect x="770" y="307.6" width="1.6" height="1.6" fill="#b8bcb8"/>
<rect x="770" y="313.1" width="1.6" height="1.6" fill="#b8bcb8"/>
<rect x="770" y="318.5" width="1.6" height="1.6" fill="#b8bcb8"/>
<rect x="770" y="324.1" width="1.6" height="1.6" fill="#b8bcb8"/>
</svg></body></html>
